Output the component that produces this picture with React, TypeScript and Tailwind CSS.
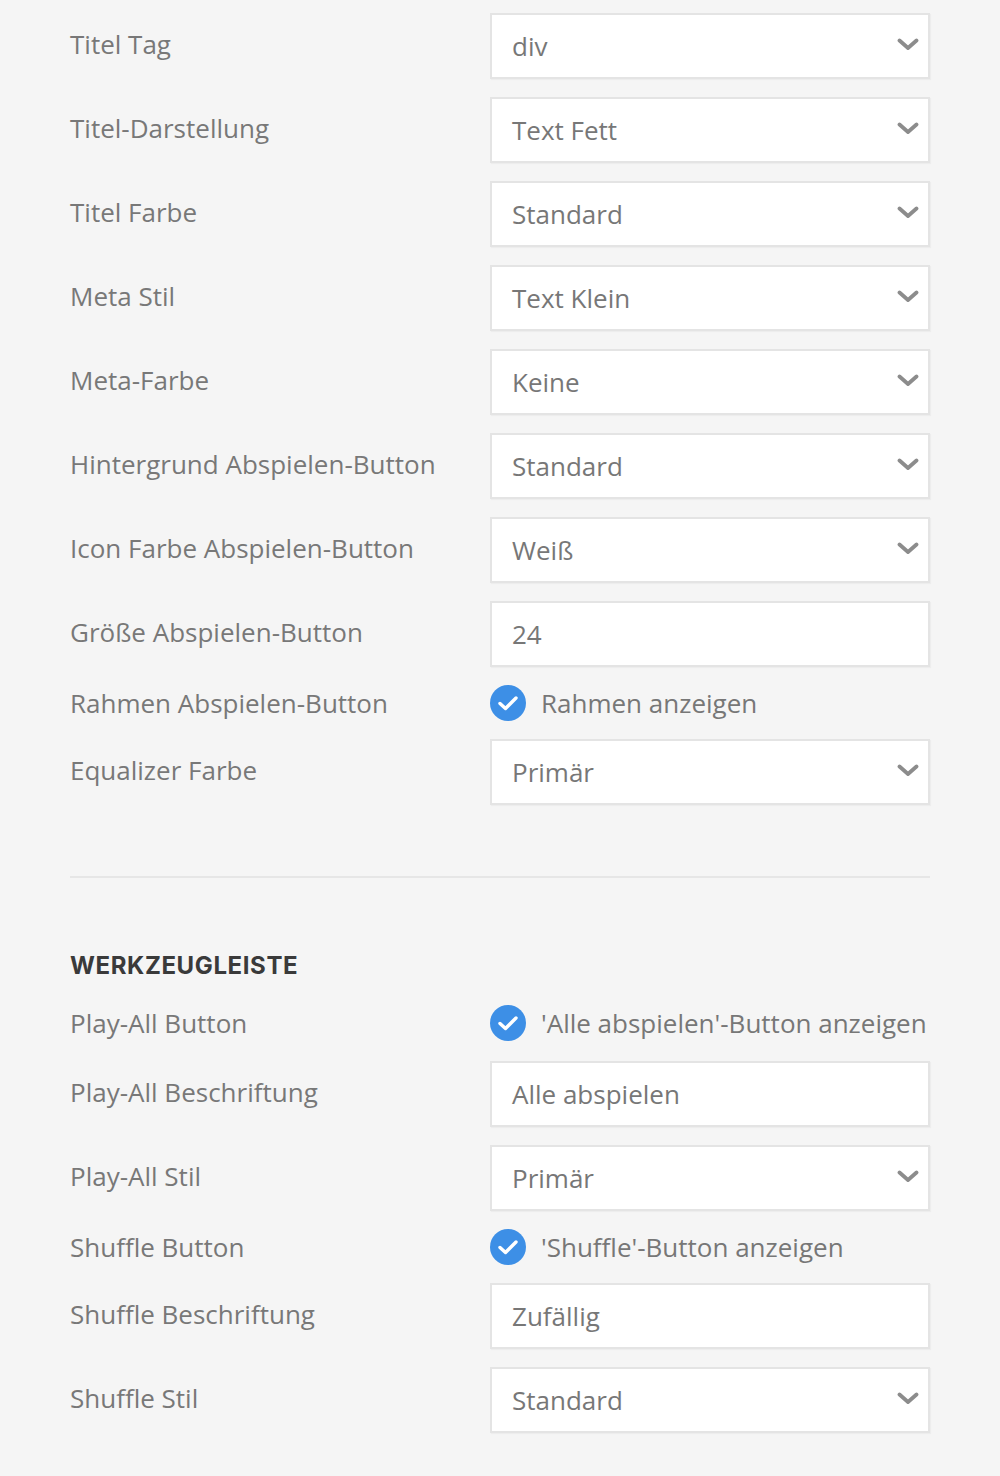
import React from 'react';

type Row =
  | { kind: 'select'; label: string; value: string }
  | { kind: 'input'; label: string; value: string }
  | { kind: 'check'; label: string; text: string };

const darstellung: Row[] = [
  { kind: 'select', label: 'Titel Tag', value: 'div' },
  { kind: 'select', label: 'Titel-Darstellung', value: 'Text Fett' },
  { kind: 'select', label: 'Titel Farbe', value: 'Standard' },
  { kind: 'select', label: 'Meta Stil', value: 'Text Klein' },
  { kind: 'select', label: 'Meta-Farbe', value: 'Keine' },
  { kind: 'select', label: 'Hintergrund Abspielen-Button', value: 'Standard' },
  { kind: 'select', label: 'Icon Farbe Abspielen-Button', value: 'Weiß' },
  { kind: 'input', label: 'Größe Abspielen-Button', value: '24' },
  { kind: 'check', label: 'Rahmen Abspielen-Button', text: 'Rahmen anzeigen' },
  { kind: 'select', label: 'Equalizer Farbe', value: 'Primär' },
];

const toolbar: Row[] = [
  { kind: 'check', label: 'Play-All Button', text: "'Alle abspielen'-Button anzeigen" },
  { kind: 'input', label: 'Play-All Beschriftung', value: 'Alle abspielen' },
  { kind: 'select', label: 'Play-All Stil', value: 'Primär' },
  { kind: 'check', label: 'Shuffle Button', text: "'Shuffle'-Button anzeigen" },
  { kind: 'input', label: 'Shuffle Beschriftung', value: 'Zufällig' },
  { kind: 'select', label: 'Shuffle Stil', value: 'Standard' },
];

function Chevron() {
  return (
    <svg width="22" height="13" viewBox="0 0 22 13" fill="none" className="mb-[3px] shrink-0">
      <polyline points="2.5,2.5 11,10 19.5,2.5" stroke="#8c8c8c" strokeWidth="3.8" strokeLinecap="round" strokeLinejoin="round" />
    </svg>
  );
}

function CheckCircle() {
  return (
    <span className="flex h-[36px] w-[36px] shrink-0 items-center justify-center rounded-full bg-[#3d8fe6]">
      <svg width="22" height="18" viewBox="0 0 22 18" fill="none">
        <polyline points="3,9.5 8.5,14.5 19,4" stroke="#ffffff" strokeWidth="3.4" strokeLinecap="round" strokeLinejoin="round" />
      </svg>
    </span>
  );
}

function Field({ row }: { row: Row }) {
  if (row.kind === 'check') {
    return (
      <div className="flex h-[36px] items-center gap-[15px]">
        <CheckCircle />
        <span className="whitespace-nowrap text-[26px] leading-[36px] text-[#777777]">{row.text}</span>
      </div>
    );
  }
  return (
    <div className="flex h-[66px] items-center justify-between border-2 border-[#e4e4e4] bg-white pl-[20px] pr-[9px] shadow-[1px_1px_1px_rgba(0,0,0,0.03)]">
      <span className="text-[26px] leading-[36px] text-[#777777]">{row.value}</span>
      {row.kind === 'select' && <Chevron />}
    </div>
  );
}

function FormRow({ row }: { row: Row }) {
  return (
    <div className="grid grid-cols-[420px_440px] items-center">
      <div className={`${row.kind === 'check' ? '' : '-mt-[4px]'} text-[26px] leading-[36px] text-[#787878]`}>{row.label}</div>
      <Field row={row} />
    </div>
  );
}

export default function App() {
  return (
    <div
      className="min-h-[1476px] w-full bg-[#f5f5f5] px-[70px] pt-[13px]"
      style={{ fontFamily: '"Open Sans", "Noto Sans", sans-serif' }}
    >
      <div className="flex flex-col gap-[18px]">
        {darstellung.map((r) => (
          <FormRow key={r.label} row={r} />
        ))}
      </div>

      <div className="mt-[71px] h-[2px] bg-[#e6e6e6]" />

      <h3
        className="mt-[73px] text-[24px] font-bold uppercase leading-[30px] tracking-[0.6px] text-[#3a3a3a]"
        style={{ fontFamily: 'Inter, "Noto Sans", sans-serif' }}
      >
        Werkzeugleiste
      </h3>

      <div className="mt-[24px] flex flex-col gap-[18px]">
        {toolbar.map((r, i) => (
          <div key={r.label} className={i === 0 ? 'mb-[2px]' : ''}>
            <FormRow row={r} />
          </div>
        ))}
      </div>
    </div>
  );
}
